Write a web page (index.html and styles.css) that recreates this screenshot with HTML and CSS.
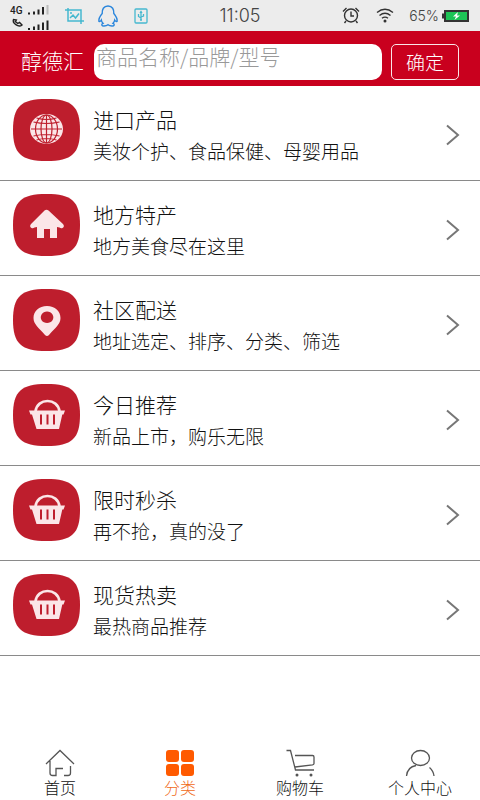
FILE: index.html
```html
<!DOCTYPE html>
<html lang="zh-CN">
<head>
<meta charset="utf-8">
<meta name="viewport" content="width=device-width, initial-scale=1">
<title>醇德汇 - 分类</title>
<link rel="stylesheet" href="styles.css">
</head>
<body>
<svg class="defs" aria-hidden="true">
  <symbol id="tile" viewBox="0 0 67 62">
    <path fill="#be1e2d" d="M33.500 0C59 0 67 7.500 67 31S59 62 33.500 62 0 54.500 0 31 8 0 33.500 0Z"/>
  </symbol>
  <symbol id="basket" viewBox="0 0 67 62">
    <use href="#tile"/>
    <path fill="none" stroke="#fbe6e8" stroke-width="2.600" d="M22.500 27.500C24 13.500 45 13.500 46.500 27.500"/>
    <path fill="#fbe6e8" d="M16 26.500h36l-1.500 4h-1.200L46 45H23.500L19 30.500H17.500Z"/>
    <path fill="none" stroke="#be1e2d" stroke-width="2" d="M28 30.500v10M34.500 30.500v10M41 30.500v10"/>
  </symbol>
</svg>

<div class="status">
  <div class="status-side">
    <svg width="40" height="22" viewBox="0 0 40 22" role="img" aria-label="信号">
      <text class="net" x="0" y="9">4G</text>
      <path fill="none" stroke="#222" stroke-width="1.400" d="M3.500 14.500c-1.500 3.500 5 8.500 8.500 5.500l-2.500-2.500-1.700 1-2.500-2 1-1.500z"/>
      <path stroke="#222" stroke-width="2" d="M19 9.500V7.500M24 9.500V6.500M28.500 9.500V4.500M33 9.500V2M19 25V23M24 25V21.500M28.500 25V19.500M33 25V17.500M37.500 25V15.500"/>
      <path stroke="#bbb" stroke-width="2" d="M37.500 9.500V0"/>
    </svg>
    <svg class="shot" width="20" height="16" viewBox="0 0 20 16" fill="none" stroke="#45b8cf" stroke-width="1.500" aria-hidden="true">
      <path d="M0 2h16v11M3 0v13h16M16 13v3M5 10l3-3 2.500 3L14 5.500M5 5h2"/>
    </svg>
    <svg class="qq" width="20" height="22" viewBox="0 0 20 22" fill="none" stroke="#2a86dc" stroke-width="1.400" aria-hidden="true">
      <path d="M10 1C5.500 1 4 4.500 4.200 8.500 2.500 10.500 .5 14 1 16.500c.8.500 1.700-.5 2.300-1.500.2 1.500.8 2.500 1.700 3.300-2 .7-1.500 2.700 1 2.700 1.700 0 3-.4 4-1.300 1 .9 2.300 1.300 4 1.300 2.500 0 3-2 1-2.700.9-.8 1.500-1.800 1.700-3.300.6 1 1.500 2 2.300 1.500.5-2.500-1.500-6-3.200-8C16 4.500 14.500 1 10 1Z"/>
    </svg>
    <svg class="usb" width="14" height="16" viewBox="0 0 14 16" fill="none" stroke="#45b8cf" stroke-width="1.300" aria-hidden="true">
      <rect x="1" y="1" width="12" height="14" rx="1"/>
      <path d="M7 4v8M4.500 6v2.500L7 10M9.500 6v2L7 9M6 5l1-1.500L8 5M6 12h2"/>
    </svg>
  </div>
  <time class="clock">11:05</time>
  <div class="status-side status-right">
    <svg width="18" height="17" viewBox="0 0 18 17" fill="none" stroke="#333" stroke-width="1.400" aria-hidden="true">
      <circle cx="9" cy="8.500" r="6.500"/><path d="M9 4.500v4.500h3M1 4.500L4.500 1M17 4.500L13.500 1M4 14l-1.500 2M14 14l1.500 2"/>
    </svg>
    <svg class="wifi" width="18" height="15" viewBox="0 0 18 15" fill="none" stroke="#333" stroke-width="1.400" aria-hidden="true">
      <path d="M1 4.500Q9-2 17 4.500M3.500 7.500Q9 3 14.500 7.500M6 10.300Q9 8 12 10.300"/><circle cx="9" cy="13" r="1.500" fill="#333" stroke="none"/>
    </svg>
    <span class="percent">65%</span>
    <svg class="battery" width="27" height="12" viewBox="0 0 27 12" aria-hidden="true">
      <path fill="#333" d="M2 0h25v12H2V8.500H0v-5h2z"/><path fill="#1dc556" d="M4 2h21v8H4z"/><path fill="#fff" d="M16 2l-5 4.500h3L12.500 10 18 5.500h-3z"/>
    </svg>
  </div>
</div>

<header>
  <form class="search">
    <label class="brand" for="q">醇德汇</label>
    <input id="q" type="search" placeholder="商品名称/品牌/型号">
    <button type="submit">确定</button>
  </form>
</header>

<main>
  <a class="row" href="#import">
    <svg class="icon" viewBox="0 0 67 62" aria-hidden="true"><use href="#tile"/>
      <ellipse cx="33.500" cy="30" rx="16.500" ry="15" fill="#fbe6e8"/>
      <g fill="none" stroke="#be1e2d" stroke-width="1.200"><path d="M33.500 16v28M18 30h31M20.500 23q13 3 26 0M20.500 37q13-3 26 0M23.500 19q10 3 20 0M23.500 41q10-3 20 0"/><ellipse cx="33.500" cy="30" rx="5.500" ry="14"/><ellipse cx="33.500" cy="30" rx="11" ry="14"/></g>
    </svg>
    <span class="text"><strong>进口产品</strong><span>美妆个护、食品保健、母婴用品</span></span>
    <svg class="arrow" viewBox="0 0 14 22" aria-hidden="true"><path d="M1 1.500L12 11 1 20.500"/></svg>
  </a>
  <a class="row" href="#local">
    <svg class="icon" viewBox="0 0 67 62" aria-hidden="true"><use href="#tile"/>
      <path fill="#fbe6e8" d="M31.500 16.500q2-1.500 4 0L50 30q2 2.500-.5 4-1.500.8-3-.5l-2.500-.5v11h-7V35h-6v9h-7V33l-2.500.5q-1.500 1.300-3 .5-2.500-1.500-.5-4Z"/>
    </svg>
    <span class="text"><strong>地方特产</strong><span>地方美食尽在这里</span></span>
    <svg class="arrow" viewBox="0 0 14 22" aria-hidden="true"><path d="M1 1.500L12 11 1 20.500"/></svg>
  </a>
  <a class="row" href="#delivery">
    <svg class="icon" viewBox="0 0 67 62" aria-hidden="true"><use href="#tile"/>
      <path fill="#fbe6e8" fill-rule="evenodd" d="M34 17c8 0 13.500 5 13.500 12 0 6-5 9.500-11.500 17q-2 2-4 0C25.500 38.500 20.500 35 20.500 29c0-7 5.500-12 13.500-12Zm0 5.500a6.300 5.800 0 1 0 .1 0Z"/>
    </svg>
    <span class="text"><strong>社区配送</strong><span>地址选定、排序、分类、筛选</span></span>
    <svg class="arrow" viewBox="0 0 14 22" aria-hidden="true"><path d="M1 1.500L12 11 1 20.500"/></svg>
  </a>
  <a class="row" href="#today">
    <svg class="icon" viewBox="0 0 67 62" aria-hidden="true"><use href="#basket"/></svg>
    <span class="text"><strong>今日推荐</strong><span>新品上市，购乐无限</span></span>
    <svg class="arrow" viewBox="0 0 14 22" aria-hidden="true"><path d="M1 1.500L12 11 1 20.500"/></svg>
  </a>
  <a class="row" href="#flash">
    <svg class="icon" viewBox="0 0 67 62" aria-hidden="true"><use href="#basket"/></svg>
    <span class="text"><strong>限时秒杀</strong><span>再不抢，真的没了</span></span>
    <svg class="arrow" viewBox="0 0 14 22" aria-hidden="true"><path d="M1 1.500L12 11 1 20.500"/></svg>
  </a>
  <a class="row" href="#hot">
    <svg class="icon" viewBox="0 0 67 62" aria-hidden="true"><use href="#basket"/></svg>
    <span class="text"><strong>现货热卖</strong><span>最热商品推荐</span></span>
    <svg class="arrow" viewBox="0 0 14 22" aria-hidden="true"><path d="M1 1.500L12 11 1 20.500"/></svg>
  </a>
</main>

<nav>
  <a href="#home">
    <svg viewBox="0 0 30 28" aria-hidden="true"><path d="M1 15L15 1.500 29 15M5 12v12q0 2.500 2.500 2.500H11V19.500h7M25.500 17v7q0 2.500-2.500 2.500h-4"/></svg>
    首页
  </a>
  <a class="active" href="#category" aria-current="page">
    <svg viewBox="0 0 30 28" aria-hidden="true"><g fill="#ff5a00" stroke="none"><rect x="1" y="1" width="13" height="12" rx="3"/><rect x="16" y="1" width="13" height="12" rx="3"/><rect x="1" y="15" width="13" height="12" rx="3"/><rect x="16" y="15" width="13" height="12" rx="3"/></g></svg>
    分类
  </a>
  <a href="#cart">
    <svg viewBox="0 0 30 28" aria-hidden="true"><path d="M1.500 1.500h4L10.500 21H29M10 6.500h17.500q1.500 0 1.500 1.500v6.500q0 1-1.500 1.300L10 18"/><g fill="#555" stroke="none"><circle cx="12" cy="26" r="1.500"/><circle cx="26" cy="26" r="1.500"/></g></svg>
    购物车
  </a>
  <a href="#me">
    <svg viewBox="0 0 30 28" aria-hidden="true"><ellipse cx="15.500" cy="9" rx="9" ry="7.500"/><path d="M11 16.500C5 17.500 2 22 1.500 27M24.500 18.500q4 3.500 4.500 8.500"/></svg>
    个人中心
  </a>
</nav>
</body>
</html>
```
FILE: styles.css
```css
* { box-sizing: border-box; }

body {
  margin: 0;
  min-height: 100vh;
  display: flex;
  flex-direction: column;
  background: #fff;
  color: #111;
  font-family: "Noto Sans CJK SC", sans-serif;
  font-weight: 300;
}

a { color: inherit; text-decoration: none; }

svg { flex: none; }

.defs { position: absolute; width: 0; height: 0; }

.status {
  display: grid;
  grid-template-columns: 1fr auto 1fr;
  align-items: center;
  height: 31px;
  padding: 0 10px;
  background: #ececec;
  color: #444;
}

.status-side { display: flex; align-items: center; }
.status-side svg { overflow: visible; }
.status-right { justify-content: flex-end; }
.net { font: 500 10px Roboto, sans-serif; fill: #222; }
.shot { margin-left: 15px; }
.qq { margin-left: 13px; }
.usb { margin-left: 16px; }
.clock { font: 300 18px Inter, sans-serif; }
.wifi { margin-left: 16px; }
.percent { margin-left: 15px; font: 300 14px Inter, sans-serif; }
.battery { margin: 0 1px 0 3px; }

header { background: #c9001e; }

.search {
  display: flex;
  align-items: center;
  height: 55px;
  padding: 6px 21px 0;
}

.brand {
  padding-bottom: 4px;
  color: #fff;
  font-size: 21px;
  line-height: 24px;
}

.search input {
  flex: 1;
  min-width: 0;
  height: 36px;
  margin: 0 9px 0 10px;
  padding: 0 2px 12px;
  border: 0;
  border-radius: 10px;
  background: #fff;
  font: inherit;
  font-size: 21px;
  line-height: 24px;
}

.search input::placeholder { color: #999; opacity: 1; }

.search button {
  width: 68px;
  height: 36px;
  padding: 0;
  border: 1px solid #fbe6e8;
  border-radius: 5px;
  background: none;
  color: #fff;
  font: inherit;
  font-size: 19px;
}

.row {
  display: flex;
  align-items: center;
  height: 95px;
  padding: 0 20px 6px 13px;
  border-bottom: 1px solid #8a8a8a;
}

.icon { width: 67px; height: 62px; }

.text {
  flex: 1;
  display: flex;
  flex-direction: column;
  gap: 5px;
  margin: 9px 0 0 13px;
  font-size: 19px;
  line-height: 26px;
}

.text strong { font-size: 21px; font-weight: 300; line-height: 28px; }

.arrow {
  width: 14px;
  height: 22px;
  margin-top: 10px;
  fill: none;
  stroke: #777;
  stroke-width: 2;
}

nav {
  display: grid;
  grid-template-columns: repeat(4, 1fr);
  margin-top: auto;
  font-size: 16px;
  line-height: 20px;
}

nav a {
  display: flex;
  flex-direction: column;
  align-items: center;
  padding-bottom: 3px;
}

nav svg {
  width: 30px;
  height: 28px;
  fill: none;
  stroke: #555;
  stroke-width: 1.3;
}

.active { color: #f06a20; }
```
